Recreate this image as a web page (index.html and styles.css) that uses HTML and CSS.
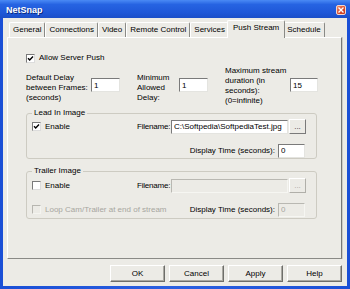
FILE: index.html
```html
<!DOCTYPE html>
<html lang="en">
<head>
  <meta charset="UTF-8" />
  <title>NetSnap</title>
  <link rel="stylesheet" href="styles.css">
</head>
<body>
  <div class="window">
    <div class="titlebar">
      <span class="title">NetSnap</span>
      <span class="close">
        <svg width="8" height="8" viewBox="0 0 8 8"><path d="M1.5 1.5 L6.5 6.5 M6.5 1.5 L1.5 6.5" stroke="#fff" stroke-width="1.4" fill="none"/></svg>
      </span>
    </div>

    <div class="client">
      <div class="tabs">
        <div class="tab">General</div>
        <div class="tab">Connections</div>
        <div class="tab">Video</div>
        <div class="tab">Remote Control</div>
        <div class="tab">Services</div>
        <div class="tab active">Push Stream</div>
        <div class="tab">Schedule</div>
      </div>

      <div class="panel">
        <div class="check">
          <span class="box"><svg width="7" height="7" viewBox="0 0 7 7"><path d="M1 3.2 L2.7 5 L6 1.5" stroke="#000" stroke-width="1.4" fill="none"/></svg></span>
          Allow Server Push
        </div>

        <div class="delays">
          <div class="lbl lbl-a">Default Delay<br>between Frames:<br>(seconds)</div>
          <input class="field num" type="text" value="1" />
          <div class="lbl lbl-b">Minimum<br>Allowed<br>Delay:</div>
          <input class="field num" type="text" value="1" />
          <div class="lbl lbl-c">Maximum stream<br>duration (in<br>seconds):<br>(0=infinite)</div>
          <input class="field num short" type="text" value="15" />
        </div>

        <fieldset class="group lead">
          <legend>Lead In Image</legend>
          <div class="row">
            <div class="check wide">
              <span class="box"><svg width="7" height="7" viewBox="0 0 7 7"><path d="M1 3.2 L2.7 5 L6 1.5" stroke="#000" stroke-width="1.4" fill="none"/></svg></span>
              Enable
            </div>
            <span class="fname">Filename:</span>
            <input class="field path" type="text" value="C:\Softpedia\SoftpediaTest.jpg" />
            <button class="browse" type="button">...</button>
          </div>
          <div class="row second">
            <span class="spacer"></span>
            <span class="dlabel">Display Time (seconds):</span>
            <input class="field time" type="text" value="0" />
          </div>
        </fieldset>

        <fieldset class="group trailer">
          <legend>Trailer Image</legend>
          <div class="row">
            <div class="check wide">
              <span class="box"></span>
              Enable
            </div>
            <span class="fname">Filename:</span>
            <input class="field path" type="text" value="" disabled />
            <button class="browse" type="button" disabled>...</button>
          </div>
          <div class="row second">
            <div class="check disabled">
              <span class="box"></span>
              Loop Cam/Trailer at end of stream
            </div>
            <span class="spacer"></span>
            <span class="dlabel">Display Time (seconds):</span>
            <input class="field time" type="text" value="0" disabled />
          </div>
        </fieldset>
      </div>

      <div class="buttons">
        <button type="button" class="btn">OK</button>
        <button type="button" class="btn">Cancel</button>
        <button type="button" class="btn">Apply</button>
        <button type="button" class="btn">Help</button>
      </div>
    </div>
  </div>
</body>
</html>
```

FILE: styles.css
```css
* {
  margin: 0;
  padding: 0;
  box-sizing: border-box;
}
body {
  width: 350px;
  height: 289px;
  font-family: 'Liberation Sans', Arial, sans-serif;
  font-size: 8px;
  color: #000;
  overflow: hidden;
}
.window {
  width: 350px;
  height: 289px;
  background: linear-gradient(90deg, #1a4fd6, #2a5fe0 50%, #1a4fd6);
  padding: 0 3px 3px 3px;
  display: flex;
  flex-direction: column;
}
.titlebar {
  height: 18px;
  margin: 0 -3px;
  padding: 1px 4px 0 6px;
  display: flex;
  align-items: center;
  justify-content: space-between;
  background: linear-gradient(#4a8af5 0%, #2663e2 25%, #1f58d8 70%, #1b4fc8 100%);
}
.title {
  color: #fff;
  font-size: 9px;
  font-weight: bold;
  text-shadow: 1px 1px 0 #0a2a80;
}
.close {
  width: 10px;
  height: 10px;
  border: 1px solid #f3d6cc;
  border-radius: 2px;
  background: linear-gradient(135deg, #f08a68, #d8482a 60%, #c2381c);
  display: flex;
  align-items: center;
  justify-content: center;
}
.client {
  flex: 1;
  background: #ecebe6;
  padding: 0 5px 0 4px;
  display: flex;
  flex-direction: column;
}
.tabs {
  height: 19px;
  display: flex;
  align-items: flex-end;
  padding-left: 2px;
}
.tab {
  height: 15px;
  line-height: 14px;
  padding: 0 3px;
  background: #ecebe6;
  border-top: 1px solid #fff;
  border-left: 1px solid #fff;
  border-right: 1px solid #8a8a86;
  border-radius: 2px 2px 0 0;
  white-space: nowrap;
}
.tab.active {
  position: relative;
  z-index: 1;
  height: 18px;
  line-height: 14px;
  padding: 0 5px 3px 5px;
  margin: 0 -2px -1px -2px;
  background: #ecebe6;
}
.panel {
  height: 222px;
  border: 1px solid;
  border-color: #fff #777 #8a8a86 #fff;
  box-shadow: 1px 0 0 #cfcdc6;
  padding: 15px 0 0 18px;
}
.check {
  display: flex;
  align-items: center;
  gap: 4px;
  height: 10px;
  line-height: 10px;
  white-space: nowrap;
}
.check.wide {
  width: 105px;
  flex-shrink: 0;
}
.check.disabled {
  color: #a7a6a0;
}
.box {
  width: 9px;
  height: 9px;
  background: #fff;
  border: 1px solid;
  border-color: #7a7a7a #dcdcdc #dcdcdc #7a7a7a;
  display: flex;
  align-items: center;
  justify-content: center;
}
.check.disabled .box {
  background: #ecebe6;
  border-color: #b7b6b0 #f4f4f0 #f4f4f0 #b7b6b0;
}
.delays {
  margin-top: 3px;
  display: flex;
  align-items: flex-start;
  line-height: 10px;
}
.lbl-a {
  width: 65px;
  margin-top: 7px;
}
.lbl-b {
  width: 42px;
  margin-left: 17px;
  margin-top: 7px;
}
.lbl-c {
  width: 65px;
  margin-left: 17px;
}
.field {
  height: 14px;
  border: 1px solid;
  border-color: #7a7a7a #e4e4e0 #e4e4e0 #7a7a7a;
  background: #fff;
  font-family: 'Liberation Sans', Arial, sans-serif;
  font-size: 8px;
  padding: 0 2px;
  color: #000;
  outline: none;
  flex-shrink: 0;
}
.field:disabled {
  background: #ecebe6;
  border-color: #b9b8b2 #f6f6f2 #f6f6f2 #b9b8b2;
  color: #a7a6a0;
}
.num {
  width: 29px;
  margin-top: 12px;
}
.num.short {
  width: 28px;
}
.group {
  width: 291px;
  border: 1px solid #cdcbc2;
  border-radius: 3px;
  padding: 1px 10px 0 5px;
}
.group legend {
  padding: 0 2px;
  line-height: 10px;
}
.lead {
  margin-top: 2px;
}
.trailer {
  margin-top: 7px;
  padding-top: 2px;
  padding-bottom: 1px;
}
.row {
  display: flex;
  align-items: center;
  height: 15px;
}
.row.second {
  margin-top: 9px;
}
.fname {
  width: 34px;
  flex-shrink: 0;
  white-space: nowrap;
  letter-spacing: -0.2px;
}
.path {
  width: 117px;
}
.browse {
  width: 17px;
  height: 15px;
  margin-left: 1px;
  flex-shrink: 0;
  font-family: 'Liberation Sans', Arial, sans-serif;
  font-size: 8px;
  line-height: 10px;
  background: #ecebe6;
  border: 1px solid;
  border-color: #fff #7a7a7a #7a7a7a #fff;
  color: #333;
}
.browse:disabled {
  color: #a7a6a0;
  border-color: #fff #b0afa9 #b0afa9 #fff;
}
.spacer {
  flex: 1;
}
.dlabel {
  padding-right: 3px;
  white-space: nowrap;
}
.time {
  width: 27px;
  margin-right: 1px;
}
.buttons {
  margin-top: 6px;
  display: flex;
  justify-content: flex-end;
  gap: 4px;
}
.btn {
  width: 55px;
  height: 17px;
  font-family: 'Liberation Sans', Arial, sans-serif;
  font-size: 8px;
  font-weight: normal;
  background: #ecebe6;
  border: 1px solid;
  border-color: #fff #6e6e6a #6e6e6a #fff;
  box-shadow: inset -1px -1px 0 #a9a8a2;
  color: #000;
}
```
